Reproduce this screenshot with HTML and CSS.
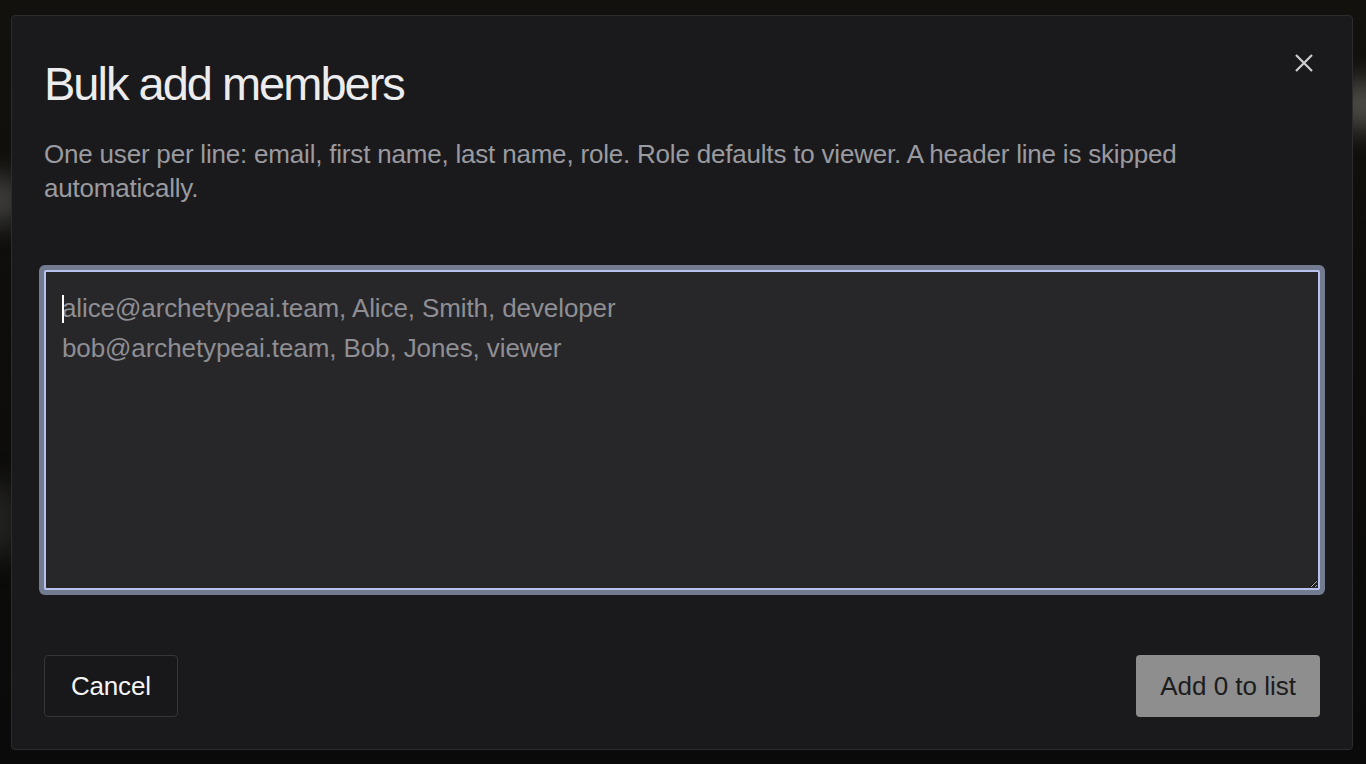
FILE: index.html
```html
<!DOCTYPE html>
<html lang="en">
<head>
<meta charset="utf-8">
<title>Bulk add members</title>
<link rel="stylesheet" href="styles.css">
</head>
<body>
<div class="backdrop">
  <div class="blob blob-left"></div>
  <div class="blob blob-left2"></div>
  <div class="blob blob-right"></div>
  <div class="dialog" role="dialog" aria-labelledby="dlg-title">
    <button class="close" aria-label="Close">
      <svg width="18" height="18" viewBox="0 0 18 18"><path d="M1 1 L17 17 M17 1 L1 17" stroke="#cfcfcf" stroke-width="2.2" stroke-linecap="butt" fill="none"/></svg>
    </button>
    <h1 id="dlg-title" class="title">Bulk add members</h1>
    <p class="desc">One user per line: email, first name, last name, role. Role defaults to viewer. A header line is skipped automatically.</p>
    <div class="field">
      <textarea class="input" placeholder="alice@archetypeai.team, Alice, Smith, developer&#10;bob@archetypeai.team, Bob, Jones, viewer"></textarea>
      <span class="caret"></span>
    </div>
    <div class="footer">
      <button class="btn btn-cancel">Cancel</button>
      <button class="btn btn-add" disabled>Add 0 to list</button>
    </div>
  </div>
</div>
</body>
</html>
```

FILE: styles.css
```css
html, body {
  margin: 0;
  padding: 0;
  height: 100%;
  background: #0b0b0a;
  font-family: "Liberation Sans", Arial, sans-serif;
}

.backdrop {
  position: relative;
  height: 764px;
  box-sizing: border-box;
  padding: 15px 13px 14px 11px;
  background: linear-gradient(180deg, #12110d 0%, #0e0d0b 40%, #0a0a0a 100%);
  overflow: hidden;
}

.blob {
  position: absolute;
  border-radius: 50%;
  filter: blur(14px);
}
.blob-left {
  left: -40px; top: 175px; width: 70px; height: 50px;
  background: rgba(120,120,120,0.45);
}
.blob-left2 {
  left: -30px; top: 480px; width: 50px; height: 80px;
  background: rgba(80,80,80,0.35);
}
.blob-right {
  right: -40px; top: 80px; width: 80px; height: 50px;
  background: rgba(150,150,140,0.45);
}

.dialog {
  position: relative;
  height: 735px;
  box-sizing: border-box;
  background: #1a1a1c;
  border: 1px solid #2c2c2f;
  border-radius: 4px;
  padding: 40px 32px 0 32px;
  display: flex;
  flex-direction: column;
}

.close {
  position: absolute;
  top: 38px;
  right: 39px;
  width: 18px;
  height: 18px;
  padding: 0;
  border: 0;
  background: none;
  display: flex;
}

.title {
  margin: 0;
  font-weight: 400;
  font-size: 47px;
  line-height: 56px;
  letter-spacing: -2px;
  color: #ececee;
}

.desc {
  margin: 25px 0 0 0;
  font-size: 26px;
  line-height: 34px;
  letter-spacing: -0.2px;
  color: #9a9aa1;
  max-width: 1170px;
}

.field {
  position: relative;
  margin-top: 65px;
}

.input {
  display: block;
  width: 100%;
  height: 320px;
  box-sizing: border-box;
  margin: 0;
  padding: 16px 16px;
  background: #272729;
  border: 2px solid #b8c2ec;
  border-radius: 2px;
  box-shadow: 0 0 0 5px #737b90;
  outline: none;
  resize: vertical;
  color-scheme: dark;
  font-family: "Liberation Sans", Arial, sans-serif;
  font-size: 26px;
  line-height: 40px;
  letter-spacing: -0.1px;
  color: #e0e0e0;
}
.input::placeholder {
  color: #8e8e94;
  opacity: 1;
}

.caret {
  position: absolute;
  left: 18px;
  top: 25px;
  width: 2px;
  height: 28px;
  background: #ffffff;
}

.footer {
  margin-top: 65px;
  display: flex;
  justify-content: space-between;
  align-items: center;
}

.btn {
  height: 62px;
  box-sizing: border-box;
  border-radius: 4px;
  font-family: "Liberation Sans", Arial, sans-serif;
  font-size: 26px;
  letter-spacing: -0.2px;
  padding: 0 26px;
}

.btn-cancel {
  background: #18181a;
  border: 1px solid #36363a;
  color: #f4f4f6;
}

.btn-add {
  background: #8e8e8e;
  border: 0;
  color: #1c1c1e;
  letter-spacing: 0;
  padding: 0 24px;
}
```
